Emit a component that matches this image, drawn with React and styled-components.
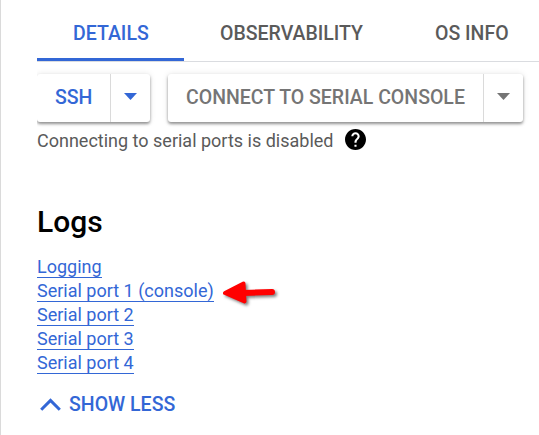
import React from "react";
import styled, { createGlobalStyle } from "styled-components";

const GlobalStyle = createGlobalStyle`
  * { box-sizing: border-box; }
  body { margin: 0; background: #fff; overflow: hidden; }
`;

const Panel = styled.main`
  height: 435px;
  padding-left: 36px;
  border-left: 1px solid #dadada;
  background: #fff;
  font-family: Roboto, sans-serif;
  overflow: hidden;
`;

const Caps = styled.span`
  display: inline-block;
  font-size: 19.5px;
  font-weight: 500;
  white-space: nowrap;
  transform: translateY(1px) scaleY(1.07);
`;

const Tabs = styled.nav`
  display: flex;
  height: 62px;
  border-bottom: 1px solid #dadce0;
`;

const Tab = styled.a`
  flex: none;
  width: ${(p) => p.$width}px;
  height: 61px;
  padding: 4px 0 0 36px;
  border-bottom: 3px solid ${(p) => (p.$active ? "#3367d6" : "transparent")};
  color: ${(p) => (p.$active ? "#3367d6" : "#5a5a5a")};
  font-size: 19.5px;
  line-height: 58px;
`;

const Actions = styled.div`
  display: flex;
  gap: 18px;
  margin-top: 12px;
  clip-path: inset(-10px -10px -10px 0);
`;

const SplitButton = styled.div`
  display: flex;
  flex: none;
  width: ${(p) => p.$width}px;
  height: 48px;
  border-radius: 3px;
  color: ${(p) => (p.$disabled ? "#757575" : "#3367d6")};
  box-shadow: 0 2px 3px rgba(0, 0, 0, 0.4), 0 0 6px rgba(0, 0, 0, 0.1);
`;

const ButtonLabel = styled.button`
  flex: 1;
  padding: 0 0 2px 18px;
  border: 0;
  background: none;
  color: inherit;
  font: 500 19.5px/46px Roboto, sans-serif;
  text-align: left;
`;

const MenuButton = styled.button`
  display: flex;
  flex: none;
  align-items: center;
  justify-content: center;
  width: 40px;
  padding: 0 0 3px;
  border: 0;
  border-left: 1px solid #dadada;
  background: none;
  color: inherit;
`;

const Notice = styled.p`
  display: flex;
  align-items: center;
  gap: 12px;
  height: 24px;
  margin: 7px 0 0;
  color: #5a5a5a;
  font-size: 18px;
  line-height: 24px;
  svg { margin-top: -3px; }
`;

const Heading = styled.h2`
  margin: 51px 0 0;
  color: #000;
  font-size: 30px;
  font-weight: 500;
  line-height: 36px;
`;

const Links = styled.ul`
  margin: 15px 0 0;
  padding: 0;
  list-style: none;
`;

const LinkRow = styled.li`
  display: flex;
  height: 24px;
`;

const LogLink = styled.a`
  height: 23px;
  border-bottom: 1px solid #3367d6;
  color: #3367d6;
  font-size: 18px;
  line-height: 24px;
`;

const ArrowIcon = styled.svg`
  flex: none;
  margin: 1px 0 0 6px;
  overflow: visible;
  filter: drop-shadow(2px 2px 1.5px rgba(0, 0, 0, 0.5));
`;

const ShowLess = styled.button`
  display: flex;
  align-items: center;
  gap: 8px;
  height: 30px;
  margin: 14px 0 0;
  padding: 0 0 0 3px;
  border: 0;
  background: none;
  color: #3367d6;
  font: 500 19.5px/30px Roboto, sans-serif;
`;

const Caret = () => (
  <svg width="13" height="7" viewBox="0 0 13 7" fill="currentColor">
    <path d="M0 0h13L6.5 7z" />
  </svg>
);

const links = ["Logging", "Serial port 1 (console)", "Serial port 2", "Serial port 3", "Serial port 4"];

export default function App() {
  return (
    <Panel>
      <GlobalStyle />
      <Tabs>
        <Tab $active $width={147}><Caps>DETAILS</Caps></Tab>
        <Tab $width={215}><Caps>OBSERVABILITY</Caps></Tab>
        <Tab $width={140}><Caps>OS INFO</Caps></Tab>
      </Tabs>
      <Actions>
        <SplitButton $width={113}>
          <ButtonLabel><Caps>SSH</Caps></ButtonLabel>
          <MenuButton aria-label="SSH options"><Caret /></MenuButton>
        </SplitButton>
        <SplitButton $width={355} $disabled>
          <ButtonLabel><Caps>CONNECT TO SERIAL CONSOLE</Caps></ButtonLabel>
          <MenuButton aria-label="Console options"><Caret /></MenuButton>
        </SplitButton>
      </Actions>
      <Notice>
        Connecting to serial ports is disabled
        <svg width="21" height="21" viewBox="2 2 20 20">
          <path d="M12 2C6.48 2 2 6.48 2 12s4.48 10 10 10 10-4.48 10-10S17.52 2 12 2zm1 17h-2v-2h2v2zm2.07-7.75l-.9.92C13.45 12.9 13 13.5 13 15h-2v-.5c0-1.1.45-2.1 1.17-2.83l1.24-1.26c.37-.36.59-.86.59-1.41 0-1.1-.9-2-2-2s-2 .9-2 2H8c0-2.21 1.79-4 4-4s4 1.79 4 4c0 .88-.36 1.68-.93 2.25z" />
        </svg>
      </Notice>
      <Heading>Logs</Heading>
      <Links>
        {links.map((name, i) => (
          <LinkRow key={name}>
            <LogLink>{name}</LogLink>
            {i === 1 && (
              <ArrowIcon width="58" height="24" viewBox="220 280 58 24">
                <path d="M225 293L243.500 283.500L244.500 301.500Z" fill="#f00" stroke="#f00" strokeWidth="4" strokeLinejoin="round" />
                <path d="M242 293L272 292" stroke="#f00" strokeWidth="6" strokeLinecap="round" />
              </ArrowIcon>
            )}
          </LinkRow>
        ))}
      </Links>
      <ShowLess>
        <svg width="21" height="13" viewBox="0 0 21 13" fill="none" stroke="currentColor" strokeWidth="3">
          <path d="M1.200 11.700L10.500 2.400L19.800 11.700" />
        </svg>
        <Caps>SHOW LESS</Caps>
      </ShowLess>
    </Panel>
  );
}
